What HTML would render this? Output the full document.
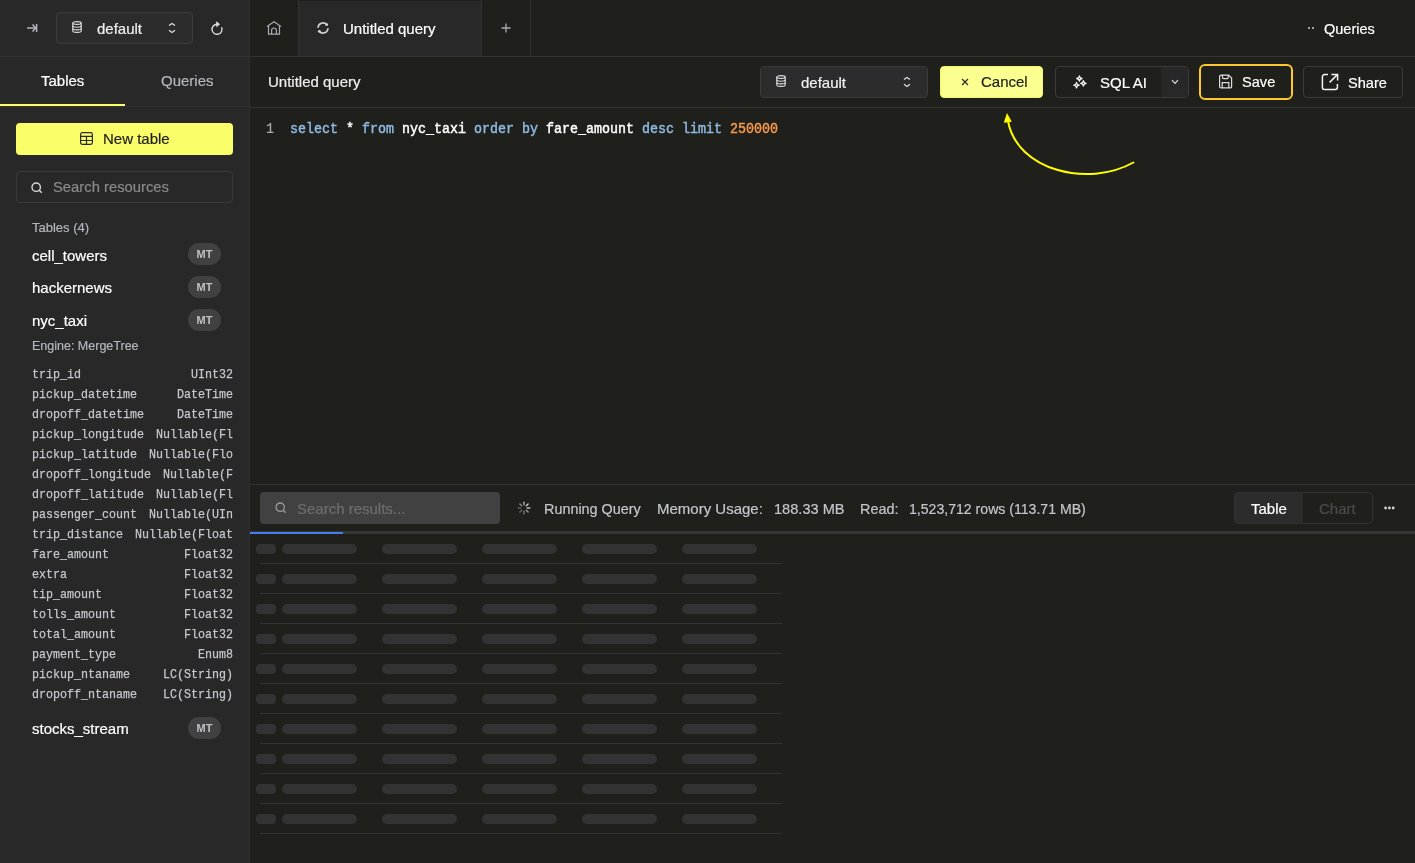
<!DOCTYPE html>
<html><head><meta charset="utf-8">
<style>
*{margin:0;padding:0;box-sizing:border-box}
body{will-change:transform;}
html,body{width:1415px;height:863px;overflow:hidden;background:#1F1F1C;font-family:"Liberation Sans",sans-serif;color:#fff}
.a{position:absolute}
.t{position:absolute;white-space:pre;line-height:20px;font-size:15px;-webkit-text-stroke:0.2px currentColor}
.m{font-family:"Liberation Mono",monospace;-webkit-text-stroke:0.2px currentColor}
svg{position:absolute;overflow:visible}
</style></head><body>

<!-- SIDEBAR -->
<div class="a" style="left:0;top:0;width:250px;height:863px;background:#282828;border-right:1px solid #323232"></div>
<!-- sidebar top bar border -->
<div class="a" style="left:0;top:56px;width:249px;height:1px;background:#323232"></div>

<!-- collapse icon -->
<svg style="left:26px;top:23px" width="12" height="10" viewBox="0 0 12 10">
  <path d="M1 5H9.5" stroke="#8f9196" stroke-width="2"/>
  <path d="M6.5 1.6L9.8 5L6.5 8.4" stroke="#b3b6bd" stroke-width="1.5" fill="none"/>
  <path d="M10.6 1V9" stroke="#b3b6bd" stroke-width="1.5"/>
</svg>

<!-- db dropdown -->
<div class="a" style="left:56px;top:12px;width:137px;height:32px;background:#2C2C2C;border:1px solid #3C3C3C;border-radius:4px"></div>
<svg style="left:72px;top:21px" width="10" height="12" viewBox="0 0 10 12" fill="none" stroke="#e2e2e2" stroke-width="1.1">
  <ellipse cx="5" cy="2" rx="4.2" ry="1.4"/>
  <path d="M0.8 2V10C0.8 10.8 2.7 11.4 5 11.4S9.2 10.8 9.2 10V2"/>
  <path d="M0.8 4.8C0.8 5.6 2.7 6.2 5 6.2S9.2 5.6 9.2 4.8"/>
  <path d="M0.8 7.5C0.8 8.3 2.7 8.9 5 8.9S9.2 8.3 9.2 7.5"/>
</svg>
<div class="t" style="left:97px;top:19px;color:#f0f0f0">default</div>
<svg style="left:168px;top:22px" width="8" height="12" viewBox="0 0 8 12" fill="none" stroke="#e0e0e0" stroke-width="1.2">
  <path d="M1 3.6L4 1.4L7 3.6"/>
  <path d="M1 8.3L4 10.6L7 8.3"/>
</svg>
<!-- refresh -->
<svg style="left:210px;top:20px" width="15" height="16" viewBox="0 0 15 16" fill="none" stroke="#dcdcdc" stroke-width="1.4">
  <path d="M11.6 7.3A5 5 0 1 1 7 4.3"/>
  <path d="M6.6 1.8L9.6 4.2L6.6 6.6Z" fill="#dcdcdc" stroke-width="0.8"/>
</svg>

<!-- sidebar tabs -->
<div class="t" style="left:41px;top:71px;color:#fff">Tables</div>
<div class="t" style="left:161px;top:71px;color:#b3b6bd">Queries</div>
<div class="a" style="left:0;top:106px;width:249px;height:1px;background:#323232"></div>
<div class="a" style="left:0;top:104px;width:125px;height:2px;background:#FAFF69"></div>

<!-- new table btn -->
<div class="a" style="left:16px;top:123px;width:217px;height:32px;background:#FAFF69;border-radius:4px"></div>
<svg style="left:80px;top:132px" width="13" height="13" viewBox="0 0 13 13" fill="none" stroke="#2a2a22" stroke-width="1.2">
  <rect x="0.6" y="0.6" width="11.8" height="11.8" rx="1.8"/>
  <path d="M0.6 4.4H12.4M0.6 8.5H12.4M6.5 4.4V12.4"/>
</svg>
<div class="t" style="left:103px;top:129px;color:#1F1F1C">New table</div>

<!-- search resources -->
<div class="a" style="left:16px;top:171px;width:217px;height:32px;background:#282828;border:1px solid #3A3A3A;border-radius:4px"></div>
<svg style="left:31px;top:182px" width="12" height="12" viewBox="0 0 12 12" fill="none" stroke="#d8d8d8" stroke-width="1.4">
  <circle cx="5.2" cy="5.2" r="4.2"/>
  <path d="M8.2 8.2L10.8 10.8"/>
</svg>
<div class="t" style="left:53px;top:177px;font-size:14.8px;color:#8a8a8a">Search resources</div>

<!-- tables list -->
<div class="t" style="left:32px;top:218px;font-size:13px;color:#b3b6bd">Tables (4)</div>

<div class="t" style="left:32px;top:245.5px;color:#fff">cell_towers</div>
<div class="a" style="left:188px;top:243px;width:33px;height:22px;border-radius:11px;background:#414141"></div>
<div class="t" style="left:188px;top:244px;width:33px;text-align:center;font-size:11px;font-weight:bold;color:#bfc0c4;-webkit-text-stroke:0">MT</div>

<div class="t" style="left:32px;top:277.5px;color:#fff">hackernews</div>
<div class="a" style="left:188px;top:276px;width:33px;height:22px;border-radius:11px;background:#414141"></div>
<div class="t" style="left:188px;top:277px;width:33px;text-align:center;font-size:11px;font-weight:bold;color:#bfc0c4;-webkit-text-stroke:0">MT</div>

<div class="t" style="left:32px;top:310.5px;color:#fff">nyc_taxi</div>
<div class="a" style="left:188px;top:309px;width:33px;height:22px;border-radius:11px;background:#414141"></div>
<div class="t" style="left:188px;top:310px;width:33px;text-align:center;font-size:11px;font-weight:bold;color:#bfc0c4;-webkit-text-stroke:0">MT</div>

<div class="t" style="left:32px;top:336px;font-size:12.5px;color:#b3b6bd">Engine: MergeTree</div>

<div class="a m" id="cols" style="left:32px;top:364.5px;width:234.3px;height:340px;overflow:hidden;font-size:13.6px;line-height:20px;color:#c6c8ce;transform:scaleX(0.858);transform-origin:0 0;-webkit-text-stroke:0.25px currentColor">
<div style="position:absolute;left:0;top:0px;white-space:pre">trip_id</div><div style="position:absolute;right:0;top:0px;white-space:pre">UInt32</div>
<div style="position:absolute;left:0;top:20px;white-space:pre">pickup_datetime</div><div style="position:absolute;right:0;top:20px;white-space:pre">DateTime</div>
<div style="position:absolute;left:0;top:40px;white-space:pre">dropoff_datetime</div><div style="position:absolute;right:0;top:40px;white-space:pre">DateTime</div>
<div style="position:absolute;left:0;top:60px;white-space:pre">pickup_longitude</div><div style="position:absolute;right:0;top:60px;white-space:pre">Nullable(Fl</div>
<div style="position:absolute;left:0;top:80px;white-space:pre">pickup_latitude</div><div style="position:absolute;right:0;top:80px;white-space:pre">Nullable(Flo</div>
<div style="position:absolute;left:0;top:100px;white-space:pre">dropoff_longitude</div><div style="position:absolute;right:0;top:100px;white-space:pre">Nullable(F</div>
<div style="position:absolute;left:0;top:120px;white-space:pre">dropoff_latitude</div><div style="position:absolute;right:0;top:120px;white-space:pre">Nullable(Fl</div>
<div style="position:absolute;left:0;top:140px;white-space:pre">passenger_count</div><div style="position:absolute;right:0;top:140px;white-space:pre">Nullable(UIn</div>
<div style="position:absolute;left:0;top:160px;white-space:pre">trip_distance</div><div style="position:absolute;right:0;top:160px;white-space:pre">Nullable(Float</div>
<div style="position:absolute;left:0;top:180px;white-space:pre">fare_amount</div><div style="position:absolute;right:0;top:180px;white-space:pre">Float32</div>
<div style="position:absolute;left:0;top:200px;white-space:pre">extra</div><div style="position:absolute;right:0;top:200px;white-space:pre">Float32</div>
<div style="position:absolute;left:0;top:220px;white-space:pre">tip_amount</div><div style="position:absolute;right:0;top:220px;white-space:pre">Float32</div>
<div style="position:absolute;left:0;top:240px;white-space:pre">tolls_amount</div><div style="position:absolute;right:0;top:240px;white-space:pre">Float32</div>
<div style="position:absolute;left:0;top:260px;white-space:pre">total_amount</div><div style="position:absolute;right:0;top:260px;white-space:pre">Float32</div>
<div style="position:absolute;left:0;top:280px;white-space:pre">payment_type</div><div style="position:absolute;right:0;top:280px;white-space:pre">Enum8</div>
<div style="position:absolute;left:0;top:300px;white-space:pre">pickup_ntaname</div><div style="position:absolute;right:0;top:300px;white-space:pre">LC(String)</div>
<div style="position:absolute;left:0;top:320px;white-space:pre">dropoff_ntaname</div><div style="position:absolute;right:0;top:320px;white-space:pre">LC(String)</div>
</div>

<div class="t" style="left:32px;top:719px;color:#fff">stocks_stream</div>
<div class="a" style="left:188px;top:717px;width:33px;height:22px;border-radius:11px;background:#414141"></div>
<div class="t" style="left:188px;top:718px;width:33px;text-align:center;font-size:11px;font-weight:bold;color:#bfc0c4;-webkit-text-stroke:0">MT</div>

<!-- MAIN TOP TAB BAR -->
<div class="a" style="left:250px;top:56px;width:1165px;height:1px;background:#323232"></div>
<div class="a" style="left:298px;top:0;width:1px;height:56px;background:#323232"></div>
<div class="a" style="left:299px;top:1px;width:182px;height:55px;background:#282828"></div>
<div class="a" style="left:481px;top:0;width:1px;height:56px;background:#323232"></div>
<div class="a" style="left:530px;top:0;width:1px;height:56px;background:#323232"></div>

<!-- home icon -->
<svg style="left:266px;top:21px" width="16" height="14" viewBox="0 0 16 14" fill="none" stroke="#a8abb2" stroke-width="1.2">
  <path d="M1 5.6L8 0.8L15 5.6"/>
  <path d="M2.5 5V13.2H13.5V5"/>
  <path d="M5.6 13.2V9.4A2.4 2.4 0 0 1 10.4 9.4V13.2"/>
</svg>
<!-- sync icon -->
<svg style="left:316px;top:21px" width="14" height="14" viewBox="0 0 14 14" fill="none" stroke="#d4d4d4" stroke-width="1.6">
  <path d="M2.0 6.83A5 5 0 0 1 10.72 3.65"/>
  <path d="M12.0 7.17A5 5 0 0 1 3.28 10.35"/>
  <circle cx="10.72" cy="3.65" r="1.35" fill="#d4d4d4" stroke="none"/>
  <circle cx="3.28" cy="10.35" r="1.35" fill="#d4d4d4" stroke="none"/>
</svg>
<div class="t" style="left:343px;top:19px;color:#fff">Untitled query</div>
<!-- plus -->
<svg style="left:501px;top:23px" width="10" height="10" viewBox="0 0 10 10" stroke="#a8abb2" stroke-width="1.3">
  <path d="M5 0.5V9.5M0.5 5H9.5"/>
</svg>
<!-- top right queries -->
<div class="a" style="left:1308px;top:27px;width:2px;height:2px;background:#cfcfcf;border-radius:1px"></div>
<div class="a" style="left:1312px;top:27px;width:2px;height:2px;background:#cfcfcf;border-radius:1px"></div>
<div class="t" style="left:1324px;top:19px;font-size:14.5px;color:#fff">Queries</div>

<!-- HEADER ROW -->
<div class="t" style="left:268px;top:72px;color:#f0f0f0">Untitled query</div>
<div class="a" style="left:250px;top:107px;width:1165px;height:1px;background:#323232"></div>

<!-- db select -->
<div class="a" style="left:760px;top:66px;width:168px;height:32px;background:#2C2C2C;border:1px solid #3C3C3C;border-radius:4px"></div>
<svg style="left:776px;top:75px" width="10" height="12" viewBox="0 0 10 12" fill="none" stroke="#e2e2e2" stroke-width="1.1">
  <ellipse cx="5" cy="2" rx="4.2" ry="1.4"/>
  <path d="M0.8 2V10C0.8 10.8 2.7 11.4 5 11.4S9.2 10.8 9.2 10V2"/>
  <path d="M0.8 4.8C0.8 5.6 2.7 6.2 5 6.2S9.2 5.6 9.2 4.8"/>
  <path d="M0.8 7.5C0.8 8.3 2.7 8.9 5 8.9S9.2 8.3 9.2 7.5"/>
</svg>
<div class="t" style="left:801px;top:73px;color:#f0f0f0">default</div>
<svg style="left:903px;top:76px" width="8" height="12" viewBox="0 0 8 12" fill="none" stroke="#e0e0e0" stroke-width="1.2">
  <path d="M1 3.6L4 1.4L7 3.6"/>
  <path d="M1 8.3L4 10.6L7 8.3"/>
</svg>

<!-- cancel -->
<div class="a" style="left:940px;top:66px;width:103px;height:32px;background:#FBFF90;border:1px solid #F2F76A;border-radius:4px"></div>
<svg style="left:961px;top:78px" width="8" height="8" viewBox="0 0 8 8" stroke="#2a2a22" stroke-width="1.2">
  <path d="M1 1L7 7M7 1L1 7"/>
</svg>
<div class="t" style="left:981px;top:72px;color:#1F1F1C">Cancel</div>

<!-- SQL AI -->
<div class="a" style="left:1055px;top:66px;width:134px;height:32px;border:1px solid #3A3A3A;border-radius:4px;overflow:hidden">
  <div class="a" style="left:105px;top:0;width:28px;height:30px;background:#282828"></div>
</div>
<svg style="left:1068px;top:70px" width="24" height="24" viewBox="0 0 24 24" fill="none" stroke="#f2f2f2" stroke-width="1.3" stroke-linejoin="round">
  <path d="M11.4 5.8Q11.65 8.25 14.100000000000001 8.5Q11.65 8.75 11.4 11.2Q11.15 8.75 8.7 8.5Q11.15 8.25 11.4 5.8Z"/>
  <path d="M15.4 10.600000000000001Q15.65 13.05 18.1 13.3Q15.65 13.55 15.4 16.0Q15.15 13.55 12.7 13.3Q15.15 13.05 15.4 10.600000000000001Z"/>
  <path d="M8.5 12.5Q8.75 14.95 11.2 15.2Q8.75 15.45 8.5 17.9Q8.25 15.45 5.8 15.2Q8.25 14.95 8.5 12.5Z"/>
</svg>
<div class="t" style="left:1100px;top:73px;color:#fff">SQL AI</div>
<svg style="left:1171px;top:79px" width="8" height="6" viewBox="0 0 8 6" fill="none" stroke="#e0e0e0" stroke-width="1.2">
  <path d="M1 1.2L4 4.4L7 1.2"/>
</svg>

<!-- Save -->
<div class="a" style="left:1199px;top:64px;width:94px;height:36px;border:2px solid #FFC62E;border-radius:6px"></div>
<svg style="left:1218px;top:74px" width="15" height="15" viewBox="0 0 15 15" fill="none" stroke="#dedede" stroke-width="1.2">
  <path d="M1.6 2.6A1.5 1.5 0 0 1 3.1 1.1H10.6L13.6 4.1V12.4A1.5 1.5 0 0 1 12.1 13.9H3.1A1.5 1.5 0 0 1 1.6 12.4Z"/>
  <path d="M4.5 1.1V3.6A1 1 0 0 0 5.5 4.6H9.2A1 1 0 0 0 10.2 3.6V1.1"/>
  <path d="M4.2 13.9V8.6H10.8V13.9"/>
</svg>
<div class="t" style="left:1242px;top:72px;font-size:14.6px;color:#fff">Save</div>

<!-- Share -->
<div class="a" style="left:1303px;top:66px;width:100px;height:32px;border:1px solid #3A3A3A;border-radius:4px"></div>
<svg style="left:1321px;top:73px" width="18" height="18" viewBox="0 0 18 18" fill="none" stroke="#f4f4f4" stroke-width="1.5">
  <path d="M7 1.6H3.4A2 2 0 0 0 1.4 3.6V14.6A2 2 0 0 0 3.4 16.6H14.4A2 2 0 0 0 16.4 14.6V11"/>
  <path d="M8.6 9.4L16.2 1.8M10.4 1.4H16.6V7.6"/>
</svg>
<div class="t" style="left:1348px;top:73px;font-size:14.6px;color:#fff">Share</div>

<!-- arrow annotation -->
<svg style="left:0;top:0" width="1415" height="863" viewBox="0 0 1415 863" fill="none">
  <path d="M1133.4 162.5C1088 187.8 1016.9 170.5 1008 121" stroke="#FFFF00" stroke-width="2.0" stroke-linecap="round"/>
  <path d="M1007 113L1003.8 122.8L1011.8 121.8Z" fill="#FFFF00"/>
</svg>

<!-- EDITOR -->
<div class="t m" style="left:266px;top:118.5px;font-size:15.4px;color:#a8a8a8;transform:scaleX(0.8658);transform-origin:0 0">1</div>
<div class="t m" style="left:290px;top:118.5px;font-size:15.4px;color:#fff;-webkit-text-stroke:0.5px currentColor;transform:scaleX(0.8658);transform-origin:0 0"><span style="color:#8FBAE0">select</span> * <span style="color:#8FBAE0">from</span> nyc_taxi <span style="color:#8FBAE0">order</span> <span style="color:#8FBAE0">by</span> fare_amount <span style="color:#8FBAE0">desc</span> <span style="color:#8FBAE0">limit</span> <span style="color:#F5994A">250000</span></div>

<!-- RESULTS TOOLBAR -->
<div class="a" style="left:250px;top:484px;width:1165px;height:1px;background:#323232"></div>
<div class="a" style="left:260px;top:492px;width:240px;height:32px;background:#414141;border-radius:4px"></div>
<svg style="left:275px;top:502px" width="12" height="12" viewBox="0 0 12 12" fill="none" stroke="#9a9a9a" stroke-width="1.3">
  <circle cx="5.2" cy="5.2" r="4.2"/>
  <path d="M8.2 8.2L10.8 10.8"/>
</svg>
<div class="t" style="left:297px;top:499px;color:#6e6e6e">Search results...</div>

<!-- spinner -->
<svg style="left:517px;top:501px" width="14" height="14" viewBox="-7 -7 14 14" stroke-width="1.4" stroke-linecap="round">
  <g stroke="#d0d0d0">
    <path d="M-0.00 -5.80L-0.00 -3.20" opacity="0.8"/>
    <path d="M4.10 -4.10L2.26 -2.26" opacity="1.0"/>
    <path d="M5.80 0.00L3.20 0.00" opacity="0.9"/>
    <path d="M4.10 4.10L2.26 2.26" opacity="0.7"/>
    <path d="M0.00 5.80L0.00 3.20" opacity="0.5"/>
    <path d="M-4.10 4.10L-2.26 2.26" opacity="0.4"/>
    <path d="M-5.80 0.00L-3.20 0.00" opacity="0.35"/>
    <path d="M-4.10 -4.10L-2.26 -2.26" opacity="0.6"/>
  </g>
</svg>
<div class="t" style="left:544px;top:499px;font-size:14.4px;color:#c4c6cc">Running Query</div>
<div class="t" style="left:657px;top:499px;color:#c4c6cc">Memory Usage:</div>
<div class="t" style="left:774px;top:499px;font-size:14.6px;color:#c4c6cc">188.33 MB</div>
<div class="t" style="left:860px;top:499px;font-size:14.4px;color:#c4c6cc">Read:</div>
<div class="t" style="left:909px;top:499px;font-size:14.1px;color:#c4c6cc">1,523,712 rows (113.71 MB)</div>

<!-- table/chart toggle -->
<div class="a" style="left:1234px;top:492px;width:139px;height:32px;border:1px solid #323232;border-radius:4px;overflow:hidden">
  <div class="a" style="left:0;top:0;width:68px;height:30px;background:#2C2C2C"></div>
</div>
<div class="t" style="left:1251px;top:499px;color:#fff">Table</div>
<div class="t" style="left:1319px;top:499px;color:#4c4c4c">Chart</div>
<svg style="left:1384px;top:506px" width="11" height="4" viewBox="0 0 11 4" fill="#d8d8d8">
  <circle cx="1.6" cy="2" r="1.4"/><circle cx="5.4" cy="2" r="1.4"/><circle cx="9.2" cy="2" r="1.4"/>
</svg>

<!-- progress -->
<div class="a" style="left:250px;top:531px;width:1165px;height:3px;background:#353535"></div>
<div class="a" style="left:250px;top:532px;width:93px;height:2px;background:#437EF0"></div>

<!-- skeleton rows -->
<div id="rows">
<div class="a" style="left:256px;top:544px;width:20px;height:10px;border-radius:4px;background:#333"></div><div class="a" style="left:282px;top:544px;width:75px;height:10px;border-radius:5px;background:#333"></div><div class="a" style="left:382px;top:544px;width:75px;height:10px;border-radius:5px;background:#333"></div><div class="a" style="left:482px;top:544px;width:75px;height:10px;border-radius:5px;background:#333"></div><div class="a" style="left:582px;top:544px;width:75px;height:10px;border-radius:5px;background:#333"></div><div class="a" style="left:682px;top:544px;width:75px;height:10px;border-radius:5px;background:#333"></div><div class="a" style="left:260px;top:563px;width:522px;height:1px;background:#323232"></div>
<div class="a" style="left:256px;top:574px;width:20px;height:10px;border-radius:4px;background:#333"></div><div class="a" style="left:282px;top:574px;width:75px;height:10px;border-radius:5px;background:#333"></div><div class="a" style="left:382px;top:574px;width:75px;height:10px;border-radius:5px;background:#333"></div><div class="a" style="left:482px;top:574px;width:75px;height:10px;border-radius:5px;background:#333"></div><div class="a" style="left:582px;top:574px;width:75px;height:10px;border-radius:5px;background:#333"></div><div class="a" style="left:682px;top:574px;width:75px;height:10px;border-radius:5px;background:#333"></div><div class="a" style="left:260px;top:593px;width:522px;height:1px;background:#323232"></div>
<div class="a" style="left:256px;top:604px;width:20px;height:10px;border-radius:4px;background:#333"></div><div class="a" style="left:282px;top:604px;width:75px;height:10px;border-radius:5px;background:#333"></div><div class="a" style="left:382px;top:604px;width:75px;height:10px;border-radius:5px;background:#333"></div><div class="a" style="left:482px;top:604px;width:75px;height:10px;border-radius:5px;background:#333"></div><div class="a" style="left:582px;top:604px;width:75px;height:10px;border-radius:5px;background:#333"></div><div class="a" style="left:682px;top:604px;width:75px;height:10px;border-radius:5px;background:#333"></div><div class="a" style="left:260px;top:623px;width:522px;height:1px;background:#323232"></div>
<div class="a" style="left:256px;top:634px;width:20px;height:10px;border-radius:4px;background:#333"></div><div class="a" style="left:282px;top:634px;width:75px;height:10px;border-radius:5px;background:#333"></div><div class="a" style="left:382px;top:634px;width:75px;height:10px;border-radius:5px;background:#333"></div><div class="a" style="left:482px;top:634px;width:75px;height:10px;border-radius:5px;background:#333"></div><div class="a" style="left:582px;top:634px;width:75px;height:10px;border-radius:5px;background:#333"></div><div class="a" style="left:682px;top:634px;width:75px;height:10px;border-radius:5px;background:#333"></div><div class="a" style="left:260px;top:653px;width:522px;height:1px;background:#323232"></div>
<div class="a" style="left:256px;top:664px;width:20px;height:10px;border-radius:4px;background:#333"></div><div class="a" style="left:282px;top:664px;width:75px;height:10px;border-radius:5px;background:#333"></div><div class="a" style="left:382px;top:664px;width:75px;height:10px;border-radius:5px;background:#333"></div><div class="a" style="left:482px;top:664px;width:75px;height:10px;border-radius:5px;background:#333"></div><div class="a" style="left:582px;top:664px;width:75px;height:10px;border-radius:5px;background:#333"></div><div class="a" style="left:682px;top:664px;width:75px;height:10px;border-radius:5px;background:#333"></div><div class="a" style="left:260px;top:683px;width:522px;height:1px;background:#323232"></div>
<div class="a" style="left:256px;top:694px;width:20px;height:10px;border-radius:4px;background:#333"></div><div class="a" style="left:282px;top:694px;width:75px;height:10px;border-radius:5px;background:#333"></div><div class="a" style="left:382px;top:694px;width:75px;height:10px;border-radius:5px;background:#333"></div><div class="a" style="left:482px;top:694px;width:75px;height:10px;border-radius:5px;background:#333"></div><div class="a" style="left:582px;top:694px;width:75px;height:10px;border-radius:5px;background:#333"></div><div class="a" style="left:682px;top:694px;width:75px;height:10px;border-radius:5px;background:#333"></div><div class="a" style="left:260px;top:713px;width:522px;height:1px;background:#323232"></div>
<div class="a" style="left:256px;top:724px;width:20px;height:10px;border-radius:4px;background:#333"></div><div class="a" style="left:282px;top:724px;width:75px;height:10px;border-radius:5px;background:#333"></div><div class="a" style="left:382px;top:724px;width:75px;height:10px;border-radius:5px;background:#333"></div><div class="a" style="left:482px;top:724px;width:75px;height:10px;border-radius:5px;background:#333"></div><div class="a" style="left:582px;top:724px;width:75px;height:10px;border-radius:5px;background:#333"></div><div class="a" style="left:682px;top:724px;width:75px;height:10px;border-radius:5px;background:#333"></div><div class="a" style="left:260px;top:743px;width:522px;height:1px;background:#323232"></div>
<div class="a" style="left:256px;top:754px;width:20px;height:10px;border-radius:4px;background:#333"></div><div class="a" style="left:282px;top:754px;width:75px;height:10px;border-radius:5px;background:#333"></div><div class="a" style="left:382px;top:754px;width:75px;height:10px;border-radius:5px;background:#333"></div><div class="a" style="left:482px;top:754px;width:75px;height:10px;border-radius:5px;background:#333"></div><div class="a" style="left:582px;top:754px;width:75px;height:10px;border-radius:5px;background:#333"></div><div class="a" style="left:682px;top:754px;width:75px;height:10px;border-radius:5px;background:#333"></div><div class="a" style="left:260px;top:773px;width:522px;height:1px;background:#323232"></div>
<div class="a" style="left:256px;top:784px;width:20px;height:10px;border-radius:4px;background:#333"></div><div class="a" style="left:282px;top:784px;width:75px;height:10px;border-radius:5px;background:#333"></div><div class="a" style="left:382px;top:784px;width:75px;height:10px;border-radius:5px;background:#333"></div><div class="a" style="left:482px;top:784px;width:75px;height:10px;border-radius:5px;background:#333"></div><div class="a" style="left:582px;top:784px;width:75px;height:10px;border-radius:5px;background:#333"></div><div class="a" style="left:682px;top:784px;width:75px;height:10px;border-radius:5px;background:#333"></div><div class="a" style="left:260px;top:803px;width:522px;height:1px;background:#323232"></div>
<div class="a" style="left:256px;top:814px;width:20px;height:10px;border-radius:4px;background:#333"></div><div class="a" style="left:282px;top:814px;width:75px;height:10px;border-radius:5px;background:#333"></div><div class="a" style="left:382px;top:814px;width:75px;height:10px;border-radius:5px;background:#333"></div><div class="a" style="left:482px;top:814px;width:75px;height:10px;border-radius:5px;background:#333"></div><div class="a" style="left:582px;top:814px;width:75px;height:10px;border-radius:5px;background:#333"></div><div class="a" style="left:682px;top:814px;width:75px;height:10px;border-radius:5px;background:#333"></div><div class="a" style="left:260px;top:833px;width:522px;height:1px;background:#323232"></div>
</div>


</body></html>
